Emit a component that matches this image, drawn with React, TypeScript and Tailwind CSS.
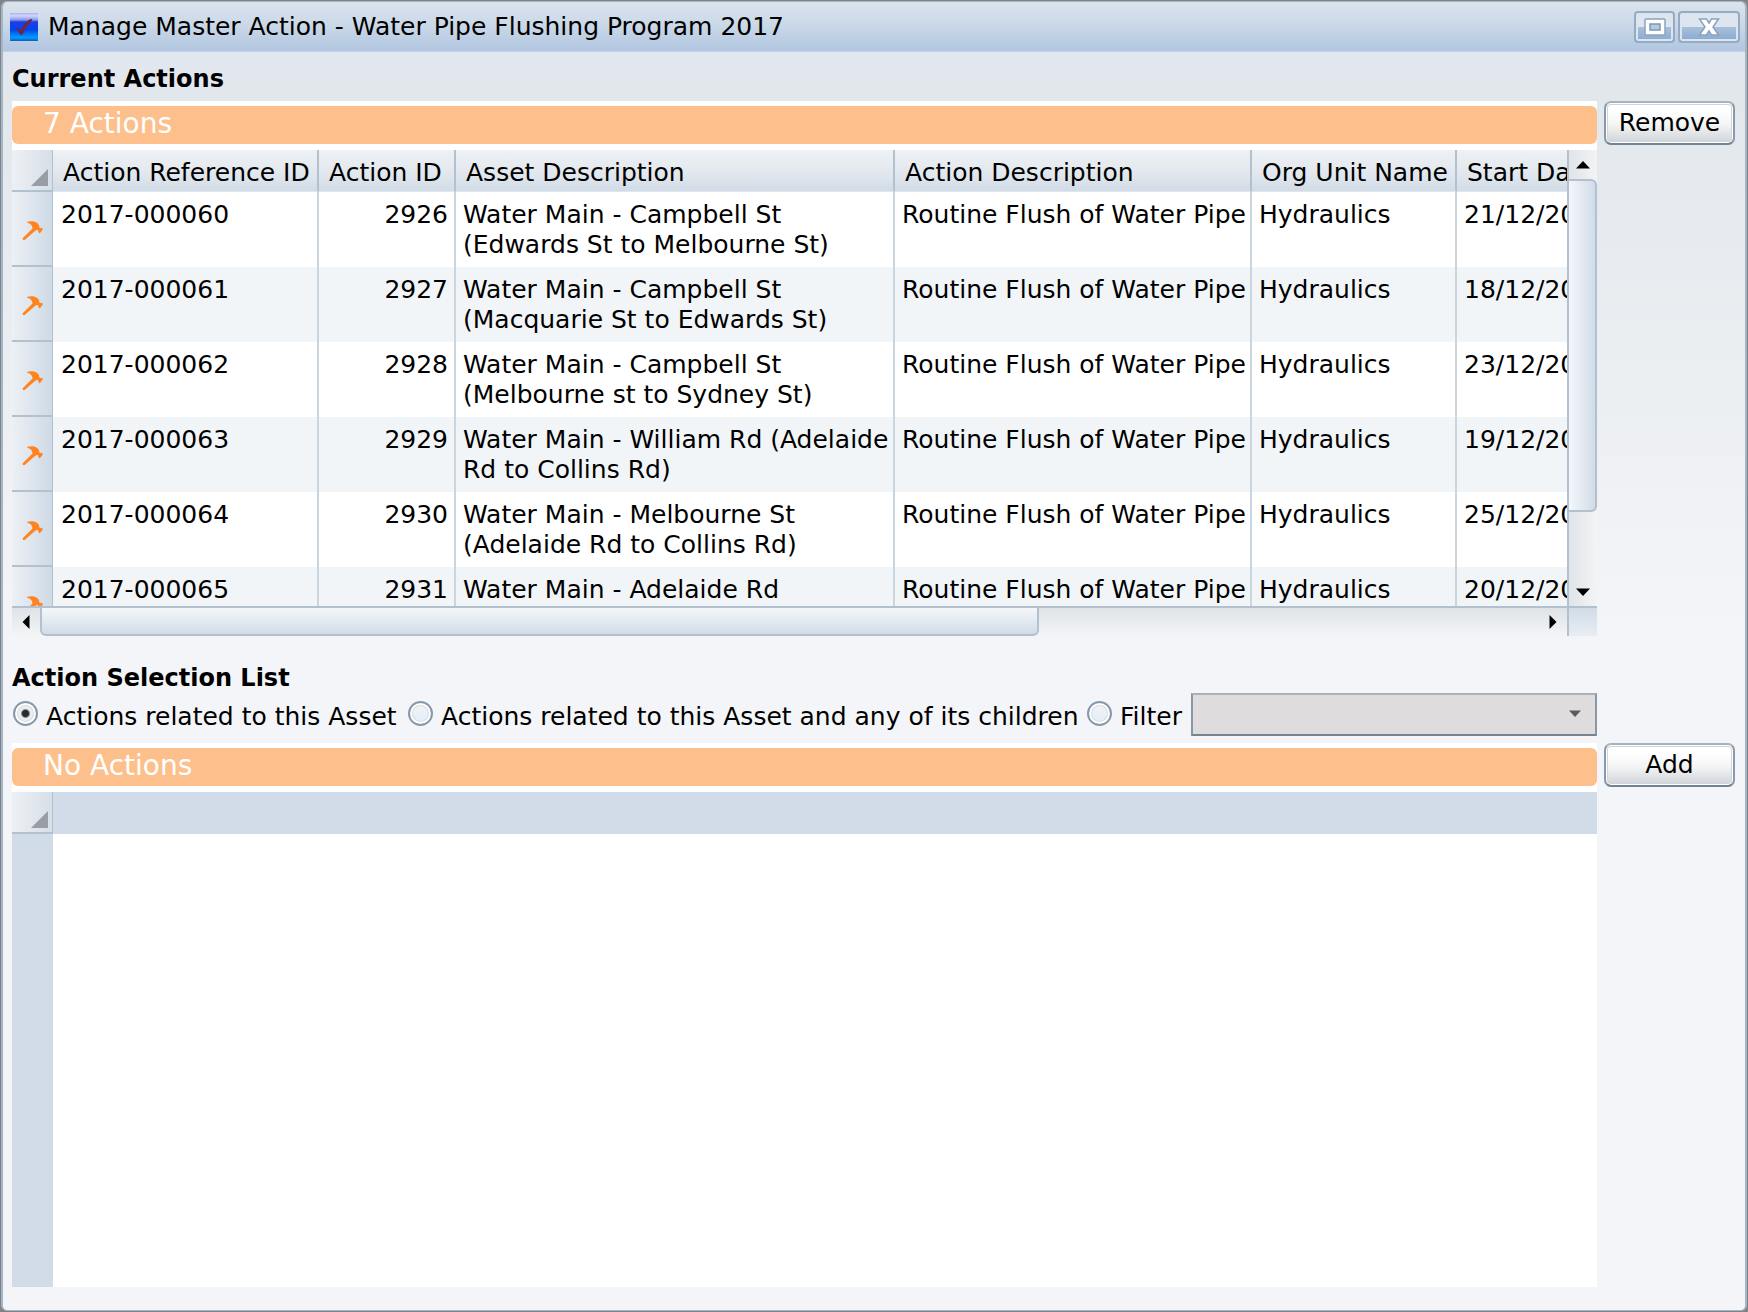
import type { ReactNode } from "react";

type Action = {
  ref: string;
  id: number;
  asset: string[];
  description: string;
  orgUnit: string;
  start: string;
};

const actions: Action[] = [
  { ref: "2017-000060", id: 2926, asset: ["Water Main - Campbell St", "(Edwards St to Melbourne St)"], description: "Routine Flush of Water Pipe", orgUnit: "Hydraulics", start: "21/12/2017" },
  { ref: "2017-000061", id: 2927, asset: ["Water Main - Campbell St", "(Macquarie St to Edwards St)"], description: "Routine Flush of Water Pipe", orgUnit: "Hydraulics", start: "18/12/2017" },
  { ref: "2017-000062", id: 2928, asset: ["Water Main - Campbell St", "(Melbourne st to Sydney St)"], description: "Routine Flush of Water Pipe", orgUnit: "Hydraulics", start: "23/12/2017" },
  { ref: "2017-000063", id: 2929, asset: ["Water Main - William Rd (Adelaide", "Rd to Collins Rd)"], description: "Routine Flush of Water Pipe", orgUnit: "Hydraulics", start: "19/12/2017" },
  { ref: "2017-000064", id: 2930, asset: ["Water Main - Melbourne St", "(Adelaide Rd to Collins Rd)"], description: "Routine Flush of Water Pipe", orgUnit: "Hydraulics", start: "25/12/2017" },
  { ref: "2017-000065", id: 2931, asset: ["Water Main - Adelaide Rd"], description: "Routine Flush of Water Pipe", orgUnit: "Hydraulics", start: "20/12/2017" },
];

const columns = ["Action Reference ID", "Action ID", "Asset Description", "Action Description", "Org Unit Name", "Start Date"];

function AppIcon() {
  return (
    <svg viewBox="0 0 28 28" className="size-7 shrink-0" aria-hidden="true">
      <defs>
        <linearGradient id="app-bg" x1="0" y1="0" x2="0" y2="1">
          <stop offset="0" stopColor="#a9b4ee" />
          <stop offset="0.1" stopColor="#d2d6f8" />
          <stop offset="0.24" stopColor="#8c9bee" />
          <stop offset="0.32" stopColor="#1c3fe0" />
          <stop offset="0.6" stopColor="#0046ee" />
          <stop offset="0.88" stopColor="#009cff" />
          <stop offset="1" stopColor="#0a5cc0" />
        </linearGradient>
      </defs>
      <rect width="28" height="28" fill="url(#app-bg)" />
      <path d="M5 15.500c2-1.500 4 0 5.500 2.500C13 12.500 16.500 8 21 6c1.400-.3 1.500.900.700 1.700-4 3.500-6.500 8-8.900 13.200-.8 1.200-2.200 1.200-3 0C8.300 18.700 7.500 16.800 5 15.500z" fill="#7a2140" />
    </svg>
  );
}

function HammerIcon() {
  return (
    <svg viewBox="36 44 64 62" className="mx-auto mt-1 size-[21px]" aria-hidden="true">
      <path
        d="M52 48.500C60 46 73 46 80 50.500C87 55 89 59 88.500 65L92.500 68L96.500 66L99.500 72L90 84L85.500 79L85.500 74C81 73 79 74 76.500 76L44 104C40 106 35.500 101.500 39 97.500L68 69C68 59 62 53 52 51Z"
        fill="#ff8420"
      />
    </svg>
  );
}

function Arrow({ d, className = "" }: { d: string; className?: string }) {
  return (
    <svg viewBox="0 0 14 14" className={`size-3.5 ${className}`} aria-hidden="true">
      <path d={d} fill="currentColor" />
    </svg>
  );
}

function TitleButton({ label, className, children }: { label: string; className: string; children: ReactNode }) {
  return (
    <button
      type="button"
      aria-label={label}
      className={`flex h-8 items-center justify-center rounded-[4px] border-2 border-[#96abc1] bg-linear-to-b from-[#dde6ef] from-50% via-[#a8c0dc] via-50% to-[#88a9cf] shadow-[inset_0_0_0_2px_#dbe5ef] ${className}`}
    >
      {children}
    </button>
  );
}

function TitleBar() {
  return (
    <header className="flex h-[50px] items-center border-b border-[#c3d3e3] bg-linear-to-b from-[#dbe4ed] via-[#c9d7e7] to-[#b1c6e1] pr-[5px] pl-[7px]">
      <AppIcon />
      <h1 className="ml-2.5 flex-1">Manage Master Action - Water Pipe Flushing Program 2017</h1>
      <TitleButton label="Restore window" className="mr-[3px] w-[41px]">
        <svg viewBox="0 0 22 18" className="h-[18px] w-[22px]" aria-hidden="true">
          <rect x="1" y="1" width="20" height="16" rx="1" fill="#fff" stroke="#8ba3bc" strokeWidth="1.500" />
          <rect x="6" y="6" width="10" height="6" fill="#b5c9de" stroke="#7d97b3" strokeWidth="1.500" />
        </svg>
      </TitleButton>
      <TitleButton label="Close window" className="w-[62px]">
        <svg viewBox="0 0 22 18" className="h-[18px] w-[22px]" aria-hidden="true">
          <path d="M1.500 1h7L11 5l2.500-4h7L15 9l5.500 8h-7L11 13l-2.500 4h-7L7 9z" fill="#fff" stroke="#8ba3bc" strokeWidth="1.500" />
        </svg>
      </TitleButton>
    </header>
  );
}

function Banner({ children }: { children: ReactNode }) {
  return (
    <div className="bg-white pt-[5px] pb-1.5">
      <p className="h-[38px] rounded-md bg-[#fdc08c] pl-[31px] text-[28px] leading-9 text-white">{children}</p>
    </div>
  );
}

function Corner() {
  return (
    <div className="flex h-[42px] items-end justify-end border-r border-b-2 border-[#b3c1cf] bg-linear-to-r from-[#edf0f4] to-[#d6dfe8] pr-1 pb-1">
      <svg viewBox="0 0 17 17" className="size-[17px]" aria-hidden="true">
        <path d="M17 0v17H0z" fill="#989da6" />
      </svg>
    </div>
  );
}

function PushButton({ children }: { children: ReactNode }) {
  return (
    <button
      type="button"
      className="h-11 w-full rounded-[7px] border-2 border-[#8799aa] border-t-[#a5b4c2] border-b-[#6f8395] bg-linear-to-b from-white from-20% via-[#f3f4f4] via-55% to-[#cfd3d8] shadow-[inset_0_0_0_1px_#fff,inset_0_0_0_2px_#d0d5da]"
    >
      {children}
    </button>
  );
}

function ActionsTable() {
  return (
    <div className="h-[456px] overflow-hidden">
      <table className="w-[1600px] table-fixed border-separate border-spacing-0 text-left">
        <colgroup>
          <col className="w-[41px]" />
          <col className="w-[266px]" />
          <col className="w-[137px]" />
          <col className="w-[439px]" />
          <col className="w-[357px]" />
          <col className="w-[205px]" />
          <col />
        </colgroup>
        <thead>
          <tr className="h-[42px]">
            <td className="p-0">
              <Corner />
            </td>
            {columns.map((name) => (
              <th
                key={name}
                scope="col"
                className="border-r-2 border-b border-r-[#b3c1cf] border-b-[#dfe6ed] bg-linear-to-b from-[#eef1f5] via-[#e4e9ef] to-[#d1dce7] pt-1 pb-0 pl-2.5 font-normal whitespace-nowrap"
              >
                {name}
              </th>
            ))}
          </tr>
        </thead>
        <tbody>
          {actions.map((a) => (
            <tr key={a.ref} className="h-[75px] align-top odd:bg-white even:bg-[#f2f5f8] [&>td]:border-r-2 [&>td]:border-[#cbd5de] [&>td]:pt-2">
              <th scope="row" aria-label={a.ref} className="border-r border-b-2 border-[#b3c1cf] bg-linear-to-r from-[#edf0f4] to-[#cedae6] p-0 align-middle">
                <HammerIcon />
              </th>
              <td className="pl-2">{a.ref}</td>
              <td className="pr-1.5 text-right">{a.id}</td>
              <td className="pl-[7px] whitespace-nowrap">
                {a.asset.map((line) => (
                  <span key={line} className="block">{line}</span>
                ))}
              </td>
              <td className="pl-[7px] whitespace-nowrap">{a.description}</td>
              <td className="pl-[7px]">{a.orgUnit}</td>
              <td className="pl-[7px]">{a.start}</td>
            </tr>
          ))}
        </tbody>
      </table>
    </div>
  );
}

function VerticalScrollbar() {
  return (
    <div className="flex flex-col border-l-2 border-[#b3c1cf] bg-linear-to-r from-[#e0e4e8] to-[#f3f4f6]">
      <button type="button" aria-label="Scroll up" className="flex h-[29px] items-center justify-center">
        <Arrow d="M0 10.500 7 3l7 7.500z" />
      </button>
      <div className="flex-1">
        <div className="h-5/6 rounded-r-md border-2 border-l-0 border-[#b3c1cf] bg-linear-to-r from-[#f4f7fa] to-[#d1dce8]" />
      </div>
      <button type="button" aria-label="Scroll down" className="flex h-7 items-center justify-center">
        <Arrow d="M0 3.500 7 11l7-7.500z" />
      </button>
    </div>
  );
}

function HorizontalScrollbar() {
  return (
    <div className="flex h-[30px] border-t-2 border-[#b3c1cf] bg-linear-to-b from-[#dfe3e7] to-[#f3f5f7]">
      <button type="button" aria-label="Scroll left" className="flex w-7 items-center justify-center">
        <Arrow d="M10.500 0 3.500 7l7 7z" />
      </button>
      <div className="flex-1">
        <div className="h-full w-2/3 rounded-md rounded-t-none border-2 border-t-0 border-[#b3c1cf] bg-linear-to-b from-[#f4f7fa] to-[#d1dce8]" />
      </div>
      <button type="button" aria-label="Scroll right" className="flex w-7 items-center justify-center">
        <Arrow d="M3.500 0l7 7-7 7z" />
      </button>
    </div>
  );
}

function RadioOption({ label, checked = false }: { label: string; checked?: boolean }) {
  return (
    <label className="flex items-center gap-2 pb-0.5 whitespace-nowrap">
      <input
        type="radio"
        name="action-scope"
        defaultChecked={checked}
        className="size-[25px] shrink-0 appearance-none rounded-full border-2 border-[#8599ab] bg-linear-to-b from-[#f2f4f6] to-[#e2eef7] shadow-[inset_0_0_0_2px_#fff,inset_0_0_0_3px_#d8dcdf] checked:bg-[radial-gradient(circle,#2b2b2b_3px,#e9eef2_5px)]"
      />
      <span className="pt-1.5">{label}</span>
    </label>
  );
}

export default function App() {
  return (
    <div className="flex min-h-screen flex-col border border-[#808285] bg-[#808285] font-['DejaVu_Sans',Verdana,sans-serif] text-[25px] leading-[30px] text-black">
      <div className="flex flex-1 flex-col overflow-hidden rounded-md border-2 border-t border-b border-[#a3b6c8]">
        <TitleBar />
        <main className="flex flex-1 flex-col bg-[#f4f5f8] bg-[linear-gradient(#e2e6ef,#e3e8ec_60px,#f4f5f8_590px)] pr-2.5 pb-[23px] pl-[9px]">
          <h2 className="mt-3 mb-[7px] text-[24px] font-bold">Current Actions</h2>
          <section className="grid grid-cols-[minmax(0,1fr)_131px] gap-x-[7px]">
            <div>
              <Banner>7 Actions</Banner>
              <div className="grid grid-cols-[minmax(0,1fr)_30px] bg-white">
                <ActionsTable />
                <VerticalScrollbar />
                <HorizontalScrollbar />
                <div className="border-t-2 border-l-2 border-[#b3c1cf] bg-linear-to-b from-[#d2dce7] to-[#e9edf4]" />
              </div>
            </div>
            <PushButton>Remove</PushButton>
          </section>

          <h2 className="mt-[27px] text-[24px] font-bold">Action Selection List</h2>
          <div className="mr-[138px] grid h-[43px] grid-cols-[395px_679px_104px_minmax(0,1fr)] pl-px">
            <RadioOption label="Actions related to this Asset" checked />
            <RadioOption label="Actions related to this Asset and any of its children" />
            <RadioOption label="Filter" />
            <div className="relative">
              <select aria-label="Filter" disabled className="size-full appearance-none border-2 border-[#8b97a2] border-t-[#a9b2ba] border-b-[#75848f] bg-[#dfdcdd] opacity-100" />
              <Arrow d="M1 3.500 7 10l6-6.500z" className="pointer-events-none absolute top-3.5 right-[15px] text-[#5c5b5c]" />
            </div>
          </div>

          <section className="mt-[7px] grid flex-1 grid-cols-[minmax(0,1fr)_131px] gap-x-[7px]">
            <div className="flex flex-col">
              <Banner>No Actions</Banner>
              <div className="grid flex-1 grid-cols-[41px_minmax(0,1fr)] grid-rows-[42px_minmax(0,1fr)] bg-white">
                <Corner />
                <div className="bg-[#d2dce8]" />
                <div className="bg-[#d2dce8]" />
              </div>
            </div>
            <PushButton>Add</PushButton>
          </section>
        </main>
      </div>
    </div>
  );
}
